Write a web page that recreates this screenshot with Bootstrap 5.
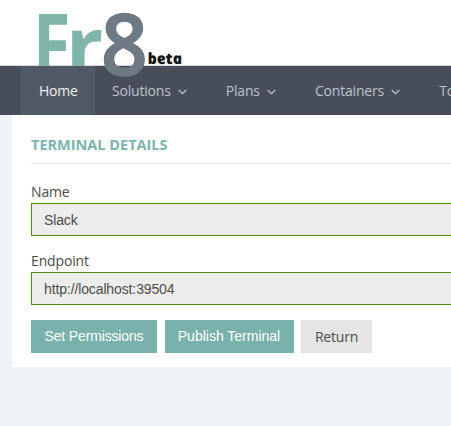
<!DOCTYPE html>
<html lang="en">
<head>
<meta charset="utf-8">
<meta name="viewport" content="width=device-width, initial-scale=1">
<title>Fr8 - Terminal Details</title>
<link href="https://cdn.jsdelivr.net/npm/bootstrap@5.3.0/dist/css/bootstrap.min.css" rel="stylesheet">
<style>
body{font-family:"Open Sans",sans-serif;font-size:14px;line-height:20px;color:#4c4c4c;background:#eff3f8;overflow:hidden}
.site-header{height:66px;border-bottom:1px solid #d5dcdf}
.logo{left:30px;top:0;z-index:5}
.main-nav{height:49px;background:#484d5a}
.main-nav .navbar-nav{margin-left:21px}
.main-nav .navbar-nav .nav-link{color:#bcc2cb;font-size:14px;letter-spacing:-.2px;line-height:20px;padding:15px 22px 14px 17px;white-space:nowrap}
.main-nav .navbar-nav .nav-link.active{color:#f1f1f1;background:#525966;padding:15px 0 14px 18px;width:74px}
.main-nav .nav-item + .nav-item .nav-link{padding-right:21.7px}
.caret{width:9px;height:6px;margin-left:7.5px}
.panel{margin-left:11.5px;height:252px;padding:20px 0 0 19.5px}
.panel-title{font-size:14.5px;line-height:20px;font-weight:700;color:#7cb4ae;padding-bottom:8px;border-bottom:1px solid #eef1f1;margin-bottom:18px}
.form-label{line-height:20px;margin-bottom:1px;letter-spacing:-.15px}
.panel .form-control{height:33px;border:1px solid #508a0c;border-right:0;border-radius:0;background:#ededed;font:14px "Liberation Sans",Arial,sans-serif;letter-spacing:-.12px;color:#4c4c4c;padding:0 12px;opacity:1;box-shadow:none;transition:none}
.endpoint-label{margin-top:15px}
.actions{margin-top:14.5px;gap:7.5px}
.btn{border:0;border-radius:0;height:33px;padding:0;width:71px;font-size:14px;letter-spacing:-.2px;line-height:33px;color:#4c4c4c;background:#e5e5e5;transition:none}
.btn-teal,.btn-teal:hover{background:#79b2ad;color:#fff;font-family:"Liberation Sans",Arial,sans-serif;width:126px;letter-spacing:-.15px}
.btn-publish{width:129px;letter-spacing:0}
</style>
<script src="https://cdn.jsdelivr.net/npm/bootstrap@5.3.0/dist/js/bootstrap.bundle.min.js"></script>
</head>
<body>
<header class="site-header bg-white position-relative">
  <a href="#" class="logo position-absolute" aria-label="Fr8 beta">
    <svg width="160" height="82" viewBox="30 0 160 82" class="d-block" font-family="Open Sans, sans-serif" font-weight="700">
      <clipPath id="above-nav"><rect x="30" y="0" width="160" height="66"/></clipPath>
      <g clip-path="url(#above-nav)" fill="#80b5a9" font-size="87">
        <text transform="translate(32.8 74.6) scale(.79 1)">F</text>
        <text transform="translate(65.8 76.3) scale(.95 .95)">r</text>
      </g>
      <text transform="translate(100.9 75.2) scale(.94 .97)" fill="#6f7983" stroke="#6f7983" stroke-width="1.6" font-weight="600" font-size="87">8</text>
      <text transform="translate(148.5 64) skewX(12)" fill="#15120f" font-size="15.5" font-weight="800" font-style="italic" textLength="34.5" lengthAdjust="spacingAndGlyphs">beta</text>
    </svg>
  </a>
</header>
<nav class="main-nav navbar navbar-expand p-0 overflow-hidden">
  <ul class="navbar-nav flex-nowrap">
    <li class="nav-item"><a class="nav-link active" href="#">Home</a></li>
    <li class="nav-item"><a class="nav-link" href="#">Solutions<svg class="caret" viewBox="0 0 9 6" fill="none" stroke="currentColor" stroke-width="1.3"><path d="M.7 1l3.8 3.7L8.3 1"/></svg></a></li>
    <li class="nav-item"><a class="nav-link" href="#">Plans<svg class="caret" viewBox="0 0 9 6" fill="none" stroke="currentColor" stroke-width="1.3"><path d="M.7 1l3.8 3.7L8.3 1"/></svg></a></li>
    <li class="nav-item"><a class="nav-link" href="#">Containers<svg class="caret" viewBox="0 0 9 6" fill="none" stroke="currentColor" stroke-width="1.3"><path d="M.7 1l3.8 3.7L8.3 1"/></svg></a></li>
    <li class="nav-item"><a class="nav-link" href="#">To</a></li>
  </ul>
</nav>
<main class="panel bg-white">
  <h1 class="panel-title">TERMINAL DETAILS</h1>
  <form>
    <label class="form-label d-block" for="name">Name</label>
    <input class="form-control" id="name" value="Slack" disabled>
    <label class="form-label endpoint-label d-block" for="endpoint">Endpoint</label>
    <input class="form-control" id="endpoint" value="http://localhost:39504" disabled>
    <div class="d-flex actions">
      <button type="button" class="btn btn-teal">Set Permissions</button>
      <button type="button" class="btn btn-teal btn-publish">Publish Terminal</button>
      <button type="button" class="btn">Return</button>
    </div>
  </form>
</main>
</body>
</html>
